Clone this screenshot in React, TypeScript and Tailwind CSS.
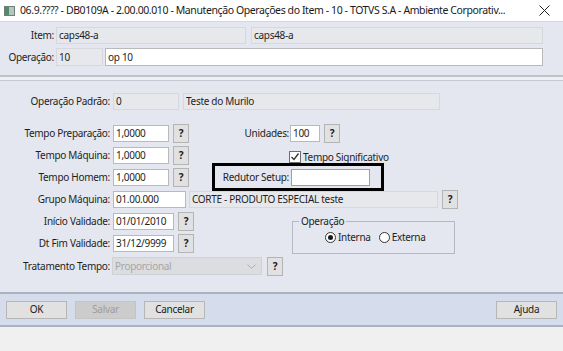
import React from "react"

const font = { fontFamily: '"Noto Sans", "Open Sans", sans-serif' }

function Help({ className = "" }: { className?: string }) {
  return (
    <div
      className={`w-[16px] h-[19px] bg-[#e1e1e1] border border-[#b4b4b4] flex items-center justify-center text-[10px] font-bold text-[#1a1a1a] shrink-0 ${className}`}
    >
      ?
    </div>
  )
}

function Field({
  w,
  value,
  ro = false,
  className = "",
}: {
  w: string
  value: string
  ro?: boolean
  className?: string
}) {
  return (
    <div
      className={`${w} h-[17px] border flex items-center px-[2px] truncate shrink-0 ${
        ro ? "bg-[#e6e8ec] border-[#d5d8de]" : "bg-white border-[#b9b9b9]"
      } ${className}`}
    >
      {value}
    </div>
  )
}

function Label({ text }: { text: string }) {
  return <div className="w-[111px] text-right pr-[1px] shrink-0">{text}</div>
}

function Btn({ text, disabled = false }: { text: string; disabled?: boolean }) {
  return (
    <div
      className={`w-[61px] h-[18px] flex items-center justify-center border ${
        disabled
          ? "bg-[#cccccc] border-[#c4c4c4] text-[#9d9d9d]"
          : "bg-[#e1e1e1] border-[#b6b6b6] text-[#1a1a1a]"
      }`}
    >
      {text}
    </div>
  )
}

function Radio({ checked }: { checked?: boolean }) {
  return (
    <div className="w-[11px] h-[11px] rounded-full border border-[#333] bg-white flex items-center justify-center">
      {checked && <div className="w-[5px] h-[5px] rounded-full bg-[#1a1a1a]" />}
    </div>
  )
}

export default function App() {
  return (
    <div
      className="w-[563px] h-[351px] bg-[#f0f0f0] text-[10px] tracking-[-0.3px] text-[#1e1e1e] overflow-hidden flex flex-col"
      style={font}
    >
      {/* title bar */}
      <div className="h-[22px] bg-white flex items-center border-b border-[#d6d6d6] shrink-0">
        <svg width="11" height="10" viewBox="0 0 11 10" className="ml-[4px] mr-[5px] shrink-0">
          <rect x="0.5" y="0.5" width="10" height="9" fill="#b8c4c0" stroke="#6f7f7a" />
          <rect x="1" y="1" width="4" height="8" fill="#4f8a6e" />
        </svg>
        <div className="text-[10.5px] tracking-[-0.4px] text-[#1a1a1a] whitespace-nowrap min-w-0 overflow-hidden">
          06.9.???? - DB0109A - 2.00.00.010 - Manutenção Operações do Item - 10 - TOTVS S.A - Ambiente Corporativ...
        </div>
        <svg width="11" height="11" viewBox="0 0 11 11" className="ml-auto mr-[13px] shrink-0">
          <path d="M0.5 0.5 L10.5 10.5 M10.5 0.5 L0.5 10.5" stroke="#222" strokeWidth="1" />
        </svg>
      </div>

      {/* top panel */}
      <div className="h-[55px] bg-[#e4e7ef] border-b-2 border-[#bfc3cc] pt-[5px] flex flex-col gap-[4px] shrink-0">
        <div className="flex items-center h-[17px]">
          <div className="w-[56px] text-right pr-[2px]">Item:</div>
          <Field w="w-[190px]" value="caps48-a" ro />
          <Field w="w-[292px]" value="caps48-a" ro className="ml-[5px]" />
        </div>
        <div className="flex items-center h-[18px]">
          <div className="w-[56px] text-right pr-[2px]">Operação:</div>
          <Field w="w-[47px]" value="10" ro className="h-[18px]" />
          <Field w="w-[438px]" value="op 10" className="ml-[2px] h-[18px]" />
        </div>
      </div>

      <div className="h-[3px] bg-[#eef0f4] shrink-0" />

      {/* main panel */}
      <div className="h-[212px] bg-[#e4e7ef] border-t border-[#c5c9d1] pt-[12px] shrink-0">
        <div className="flex items-center h-[17px]">
          <Label text="Operação Padrão:" />
          <Field w="w-[66px]" value="0" ro className="ml-[2px]" />
          <Field w="w-[257px]" value="Teste do Murilo" ro className="ml-[4px]" />
        </div>

        <div className="mt-[12px]">
          <div className="flex items-center h-[22px]">
            <div className="w-[212px] flex items-center shrink-0">
              <Label text="Tempo Preparação:" />
              <Field w="w-[56px]" value="1,0000" className="ml-[2px]" />
              <Help className="ml-[4px]" />
            </div>
            <div className="w-[78px] text-right pr-[1px]">Unidades:</div>
            <Field w="w-[30px]" value="100" />
            <Help className="ml-[4px]" />
          </div>

          <div className="flex items-center h-[22px]">
            <div className="w-[212px] flex items-center shrink-0">
              <Label text="Tempo Máquina:" />
              <Field w="w-[56px]" value="1,0000" className="ml-[2px]" />
              <Help className="ml-[4px]" />
            </div>
            <div className="ml-[77px] mt-[4px] flex items-center">
              <div className="w-[12px] h-[12px] bg-white border border-[#6e6e6e] flex items-center justify-center">
                <svg width="10" height="10" viewBox="0 0 10 10">
                  <path d="M1.5 5 L4 7.5 L8.5 1.5" fill="none" stroke="#333" strokeWidth="1.3" />
                </svg>
              </div>
              <span className="ml-[2px]">Tempo Significativo</span>
            </div>
          </div>

          <div className="flex items-center h-[22px]">
            <div className="w-[212px] flex items-center shrink-0">
              <Label text="Tempo Homem:" />
              <Field w="w-[56px]" value="1,0000" className="ml-[2px]" />
              <Help className="ml-[4px]" />
            </div>
            <div className="w-[172px] h-[28px] border-[3px] border-black flex items-center">
              <div className="w-[76px] text-right pr-[2px]">Redutor Setup:</div>
              <div className="w-[79px] h-[17px] bg-white border border-[#7ea4d8]" />
            </div>
          </div>

          <div className="flex items-center h-[22px]">
            <Label text="Grupo Máquina:" />
            <Field w="w-[73px]" value="01.00.000" className="ml-[2px]" />
            <Field w="w-[249px]" value="CORTE - PRODUTO ESPECIAL teste" ro className="ml-[3px]" />
            <Help className="ml-[4px]" />
          </div>

          <div className="flex">
            <div className="w-[212px] shrink-0">
              <div className="flex items-center h-[22px]">
                <Label text="Início Validade:" />
                <Field w="w-[61px]" value="01/01/2010" className="ml-[2px]" />
                <Help className="ml-[4px]" />
              </div>
              <div className="flex items-center h-[22px]">
                <Label text="Dt Fim Validade:" />
                <Field w="w-[61px]" value="31/12/9999" className="ml-[2px]" />
                <Help className="ml-[4px]" />
              </div>
            </div>
            <fieldset className="ml-[80px] mt-[5px] w-[163px] h-[39px] border border-[#b4b8c2] px-[4px]">
              <legend className="ml-[2px] px-[2px] leading-[12px]">Operação</legend>
              <div className="flex items-center gap-[2px] ml-[28px] mt-[3px]">
                <Radio checked />
                <span>Interna</span>
                <div className="ml-[6px]">
                  <Radio />
                </div>
                <span>Externa</span>
              </div>
            </fieldset>
          </div>

          <div className="flex items-center h-[24px]">
            <Label text="Tratamento Tempo:" />
            <div className="ml-[1px] w-[150px] h-[18px] bg-[#dcdde0] border border-[#d0d1d4] flex items-center px-[2px] text-[#a6a6a6]">
              Proporcional
              <svg width="9" height="5" viewBox="0 0 9 5" className="ml-auto mr-[3px]">
                <path d="M0.5 0.5 L4.5 4.5 L8.5 0.5" fill="none" stroke="#b0b0b0" />
              </svg>
            </div>
            <Help className="ml-[5px]" />
          </div>
        </div>
      </div>

      {/* button bar */}
      <div className="h-[35px] bg-[#d5dcec] border-t-2 border-b-2 border-[#aab1bf] flex items-center px-[6px] gap-[8px] shrink-0">
        <Btn text="OK" />
        <Btn text="Salvar" disabled />
        <Btn text="Cancelar" />
        <div className="ml-auto">
          <Btn text="Ajuda" />
        </div>
      </div>
      <div className="flex-1 bg-[#f0f0f0]" />
    </div>
  )
}
